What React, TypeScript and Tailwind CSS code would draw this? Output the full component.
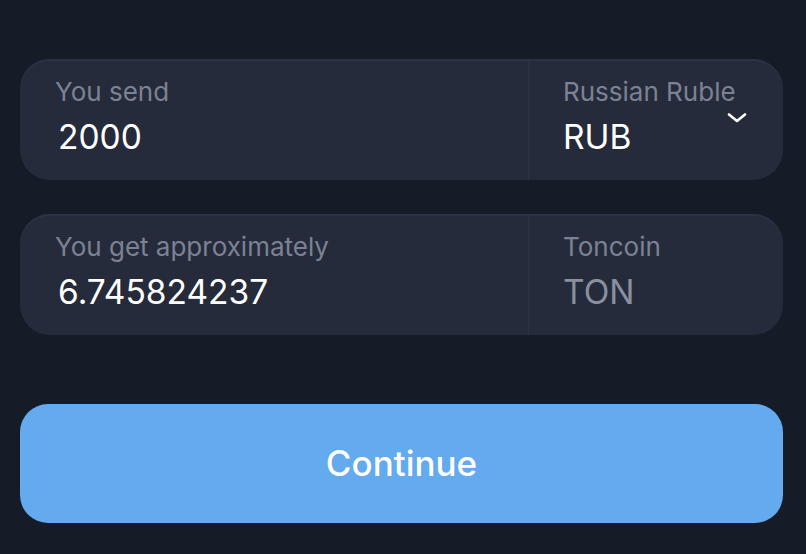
function Chevron() {
  return (
    <svg width="20" height="10" viewBox="0 0 20 10" fill="none" className="absolute right-[36px] top-[54px]">
      <path d="M2 1.5 L10 8 L18 1.5" stroke="white" strokeWidth="2.6" strokeLinecap="round" strokeLinejoin="round" />
    </svg>
  );
}

function AmountCard({
  label,
  value,
  currencyName,
  currency,
  muted,
  dropdown,
}: {
  label: string;
  value: string;
  currencyName: string;
  currency: string;
  muted?: boolean;
  dropdown?: boolean;
}) {
  return (
    <div className="flex h-[121px] whitespace-nowrap rounded-[30px] bg-[#252b3b] shadow-[inset_0_2px_0_#2b3243]">
      <div className="flex w-[508px] flex-col pl-[35px] pt-[20px]">
        <span className="text-[26px] leading-[26px] text-[#7c8293]">{label}</span>
        <span className="mt-[16px] pl-[3px] text-[33.5px] leading-[33px] text-white">{value}</span>
      </div>
      <div className="relative flex flex-1 flex-col border-l border-[#2c3243] pl-[34px] pt-[20px]">
        <span className="text-[26px] leading-[26px] text-[#7c8293]">{currencyName}</span>
        <span
          className={
            muted
              ? "mt-[16px] text-[33.5px] leading-[33px] text-[#8a90a0]"
              : "mt-[16px] text-[33.5px] leading-[33px] text-white"
          }
        >
          {currency}
        </span>
        {dropdown && <Chevron />}
      </div>
    </div>
  );
}

export default function App() {
  return (
    <div
      className="flex h-[554px] w-[806px] flex-col bg-[#161b28] pl-5 pr-[23px] pt-[59px]"
      style={{ fontFamily: "Inter, 'Noto Sans', sans-serif" }}
    >
      <AmountCard label="You send" value="2000" currencyName="Russian Ruble" currency="RUB" dropdown />
      <div className="mt-[34px]">
        <AmountCard
          label="You get approximately"
          value="6.745824237"
          currencyName="Toncoin"
          currency="TON"
          muted
        />
      </div>
      <button className="mt-[69px] flex h-[119px] items-center justify-center rounded-[28px] bg-[#63aaee] text-[35px] font-medium text-white">
        Continue
      </button>
    </div>
  );
}
